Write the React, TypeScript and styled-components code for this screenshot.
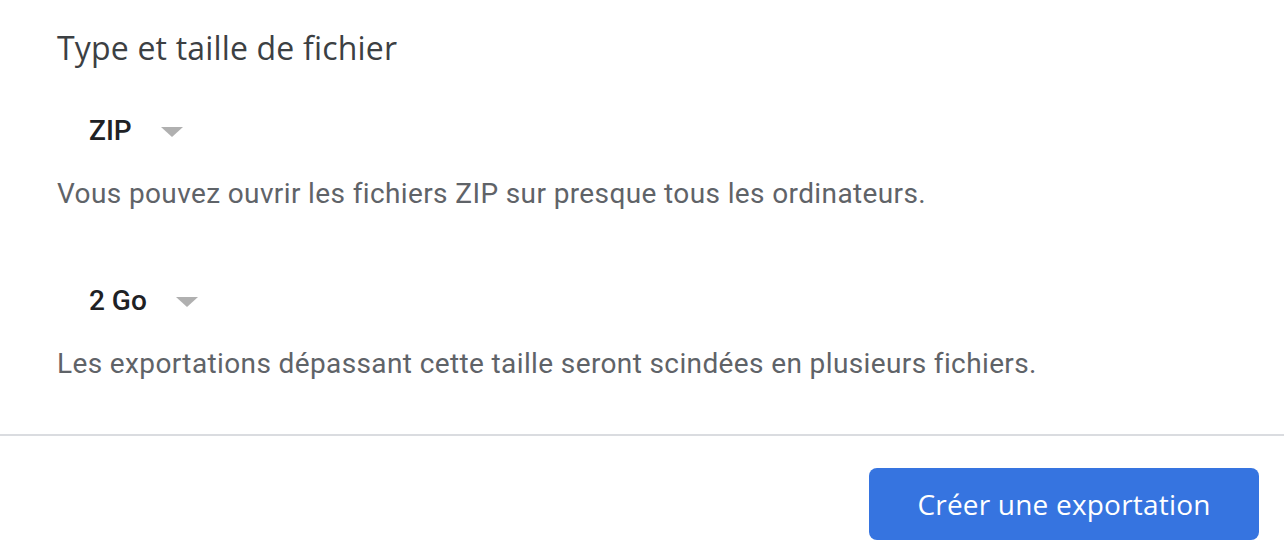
import styled, { createGlobalStyle } from "styled-components";

const GlobalStyle = createGlobalStyle`
  html, body {
    margin: 0;
    padding: 0;
    background: #ffffff;
  }
  body {
    font-family: Roboto, "Liberation Sans", sans-serif;
  }
`;

const Page = styled.div`
  width: 1284px;
  height: 558px;
  overflow: hidden;
  display: flex;
  flex-direction: column;
`;

const Content = styled.section`
  padding: 26px 0 0 57px;
  display: flex;
  flex-direction: column;
  height: 434px;
  box-sizing: border-box;
`;

const Heading = styled.h2`
  margin: 0;
  font-family: "Open Sans", Roboto, sans-serif;
  font-weight: 500;
  font-size: 32px;
  line-height: 44px;
  color: #3c4043;
  letter-spacing: 0.18px;
`;

const Select = styled.div<{ $top: number }>`
  display: flex;
  align-items: center;
  gap: 29px;
  margin-top: ${(p) => p.$top}px;
  padding-left: 32px;
  height: 48px;
`;

const SelectValue = styled.span`
  font-size: 28px;
  font-weight: 500;
  color: #202124;
  line-height: 48px;
`;

const Caret = styled.span`
  width: 0;
  height: 0;
  border-left: 11px solid transparent;
  border-right: 11px solid transparent;
  border-top: 10px solid #b0b0b0;
  margin-top: 2px;
`;

const Hint = styled.p<{ $top: number }>`
  margin: ${(p) => p.$top}px 0 0;
  font-size: 28px;
  line-height: 40px;
  color: #5f6368;
  letter-spacing: 0.38px;
`;

const Divider = styled.hr`
  margin: 0;
  border: 0;
  height: 2px;
  background: #dadce0;
`;

const Footer = styled.div`
  display: flex;
  justify-content: flex-end;
  padding: 32px 25px 0 0;
`;

const PrimaryButton = styled.button`
  width: 390px;
  height: 72px;
  border: 0;
  border-radius: 8px;
  background: #3674e0;
  color: #ffffff;
  font-family: "Open Sans", Roboto, sans-serif;
  font-size: 28px;
  font-weight: 500;
  letter-spacing: 0.2px;
  cursor: pointer;
`;

const options = [
  { value: "ZIP", hint: "Vous pouvez ouvrir les fichiers ZIP sur presque tous les ordinateurs.", top: 37 },
  { value: "2 Go", hint: "Les exportations dépassant cette taille seront scindées en plusieurs fichiers.", top: 63 },
];

export default function App() {
  return (
    <>
      <GlobalStyle />
      <Page>
        <Content>
          <Heading>Type et taille de fichier</Heading>
          {options.map((o) => (
            <div key={o.value}>
              <Select $top={o.top}>
                <SelectValue>{o.value}</SelectValue>
                <Caret />
              </Select>
              <Hint $top={19}>{o.hint}</Hint>
            </div>
          ))}
        </Content>
        <Divider />
        <Footer>
          <PrimaryButton>Créer une exportation</PrimaryButton>
        </Footer>
      </Page>
    </>
  );
}
